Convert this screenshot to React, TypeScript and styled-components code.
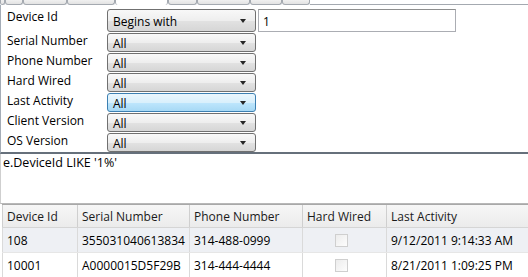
import React from 'react';
import styled, { createGlobalStyle } from 'styled-components';

interface Filter {
  label: string;
  value: string;
  active?: boolean;
}

interface Device {
  id: string;
  serial: string;
  phone: string;
  hardWired: boolean;
  lastActivity: string;
}

const GlobalStyle = createGlobalStyle`
  html, body {
    margin: 0;
    padding: 0;
    background: #ffffff;
  }
  body {
    font-family: "Open Sans", "Noto Sans", sans-serif;
    font-size: 12px;
    color: #000;
    width: 528px;
    height: 277px;
    overflow: hidden;
  }
`;

const Page = styled.div`
  display: flex;
  flex-direction: column;
  width: 528px;
  height: 277px;
  overflow: hidden;
`;

const TabStrip = styled.div`
  display: flex;
  height: 5px;
  flex-shrink: 0;
`;

const TabStub = styled.div<{ $w: number; $selected?: boolean }>`
  width: ${(p) => p.$w}px;
  box-sizing: border-box;
  height: 5px;
  border: 1px solid #a4a9b0;
  border-top: none;
  border-bottom: ${(p) => (p.$selected ? 'none' : '1px solid #a4a9b0')};
  border-radius: 0 0 3px 3px;
  background: ${(p) => (p.$selected ? '#ffffff' : 'linear-gradient(#f0f0f0, #e2e2e2)')};
`;

const TabFiller = styled.div`
  flex: 1;
  border-bottom: 1px solid #a4a9b0;
`;

const FilterPanel = styled.div`
  display: flex;
  flex-direction: column;
  flex-shrink: 0;
  height: 149px;
  padding-top: 4px;
  box-sizing: border-box;
  border-left: 1px solid #a4acb6;
  border-bottom: 2px solid #66707b;
  overflow: hidden;
`;

const FilterRow = styled.div<{ $tall?: boolean }>`
  display: grid;
  grid-template-columns: 106px 149px 200px;
  height: ${(p) => (p.$tall ? 24 : 20)}px;
  flex-shrink: 0;
`;

const Label = styled.div`
  padding-left: 6px;
  line-height: 16px;
  white-space: nowrap;
`;

const Select = styled.div<{ $tall?: boolean; $active?: boolean }>`
  display: flex;
  align-items: center;
  justify-content: space-between;
  box-sizing: border-box;
  height: ${(p) => (p.$tall ? 23 : 19)}px;
  padding: 1px 9px 0 5px;
  border: 1px solid ${(p) => (p.$active ? '#3c7fb1' : '#707070')};
  border-radius: 3px;
  background: ${(p) =>
    p.$active
      ? 'linear-gradient(#eaf6fd 0%, #d9f0fc 50%, #bee6fd 51%, #a7d9f5 100%)'
      : 'linear-gradient(#f8f8f8 0%, #eeeeee 50%, #e2e2e2 51%, #d6d6d6 100%)'};
  white-space: nowrap;
`;

const Arrow = styled.span`
  width: 0;
  height: 0;
  border-left: 3.5px solid transparent;
  border-right: 3.5px solid transparent;
  border-top: 4px solid #262626;
`;

const TextInput = styled.div`
  display: flex;
  align-items: center;
  box-sizing: border-box;
  height: 23px;
  margin-left: 2px;
  padding: 1px 4px 0;
  border: 1px solid #abadb3;
  border-top-color: #8e8f8f;
  background: #ffffff;
`;

const QueryBox = styled.div`
  flex-shrink: 0;
  height: 50px;
  box-sizing: border-box;
  padding: 1px 2px 0;
  border-left: 1px solid #cfcfcf;
  border-bottom: 1px solid #b8b8b8;
  font-size: 12.5px;
  line-height: 16px;
`;

const Grid = styled.div`
  display: flex;
  flex-direction: column;
  margin-left: 2px;
`;

const GridRow = styled.div<{ $header?: boolean; $alt?: boolean }>`
  display: grid;
  grid-template-columns: 75px 112px 113px 84px 1fr;
  flex-shrink: 0;
  height: ${(p) => (p.$header ? 24 : 25)}px;
  box-sizing: border-box;
  border-top: ${(p) => (p.$header ? '1px solid #a8a8a8' : 'none')};
  border-bottom: 1px solid ${(p) => (p.$header ? '#d5d5d5' : '#e6e6e6')};
  background: ${(p) =>
    p.$header ? 'linear-gradient(#f6f6f6, #ebebeb)' : p.$alt ? '#eef0f4' : '#ffffff'};
`;

const Cell = styled.div<{ $center?: boolean; $header?: boolean }>`
  display: flex;
  align-items: center;
  justify-content: ${(p) => (p.$center ? 'center' : 'flex-start')};
  padding-left: ${(p) => (p.$center ? 0 : 4)}px;
  padding-right: ${(p) => (p.$center ? 6 : 0)}px;
  border-left: 1px solid ${(p) => (p.$header ? '#cfcfcf' : '#dadada')};
  color: ${(p) => (p.$header ? '#1a1a1a' : '#000')};
  white-space: nowrap;
  overflow: hidden;
`;

const CheckBox = styled.span`
  width: 13px;
  height: 13px;
  box-sizing: border-box;
  border: 1px solid #cfcfcf;
  background: linear-gradient(135deg, #ececec, #fdfdfd);
`;

const filters: Filter[] = [
  { label: 'Serial Number', value: 'All' },
  { label: 'Phone Number', value: 'All' },
  { label: 'Hard Wired', value: 'All' },
  { label: 'Last Activity', value: 'All', active: true },
  { label: 'Client Version', value: 'All' },
  { label: 'OS Version', value: 'All' },
];

const devices: Device[] = [
  { id: '108', serial: '355031040613834', phone: '314-488-0999', hardWired: false, lastActivity: '9/12/2011 9:14:33 AM' },
  { id: '10001', serial: 'A0000015D5F29B', phone: '314-444-4444', hardWired: false, lastActivity: '8/21/2011 1:09:25 PM' },
];

const tabs = [
  { w: 5 },
  { w: 18 },
  { w: 44 },
  { w: 48 },
  { w: 53, selected: true },
  { w: 29 },
  { w: 53 },
  { w: 32 },
  { w: 28 },
];

const App: React.FC = () => (
  <>
    <GlobalStyle />
    <Page>
      <TabStrip>
        {tabs.map((t, i) => (
          <TabStub key={i} $w={t.w} $selected={t.selected} />
        ))}
        <TabFiller />
      </TabStrip>

      <FilterPanel>
        <FilterRow $tall>
          <Label>Device Id</Label>
          <Select $tall>
            Begins with
            <Arrow />
          </Select>
          <TextInput>1</TextInput>
        </FilterRow>
        {filters.map((f) => (
          <FilterRow key={f.label}>
            <Label>{f.label}</Label>
            <Select $active={f.active}>
              {f.value}
              <Arrow />
            </Select>
          </FilterRow>
        ))}
      </FilterPanel>

      <QueryBox>e.DeviceId LIKE '1%'</QueryBox>

      <Grid>
        <GridRow $header>
          <Cell $header>Device Id</Cell>
          <Cell $header>Serial Number</Cell>
          <Cell $header>Phone Number</Cell>
          <Cell $header>Hard Wired</Cell>
          <Cell $header>Last Activity</Cell>
        </GridRow>
        {devices.map((d, i) => (
          <GridRow key={d.id} $alt={i % 2 === 0}>
            <Cell>{d.id}</Cell>
            <Cell>{d.serial}</Cell>
            <Cell>{d.phone}</Cell>
            <Cell $center>
              <CheckBox />
            </Cell>
            <Cell>{d.lastActivity}</Cell>
          </GridRow>
        ))}
      </Grid>
    </Page>
  </>
);

export default App;
